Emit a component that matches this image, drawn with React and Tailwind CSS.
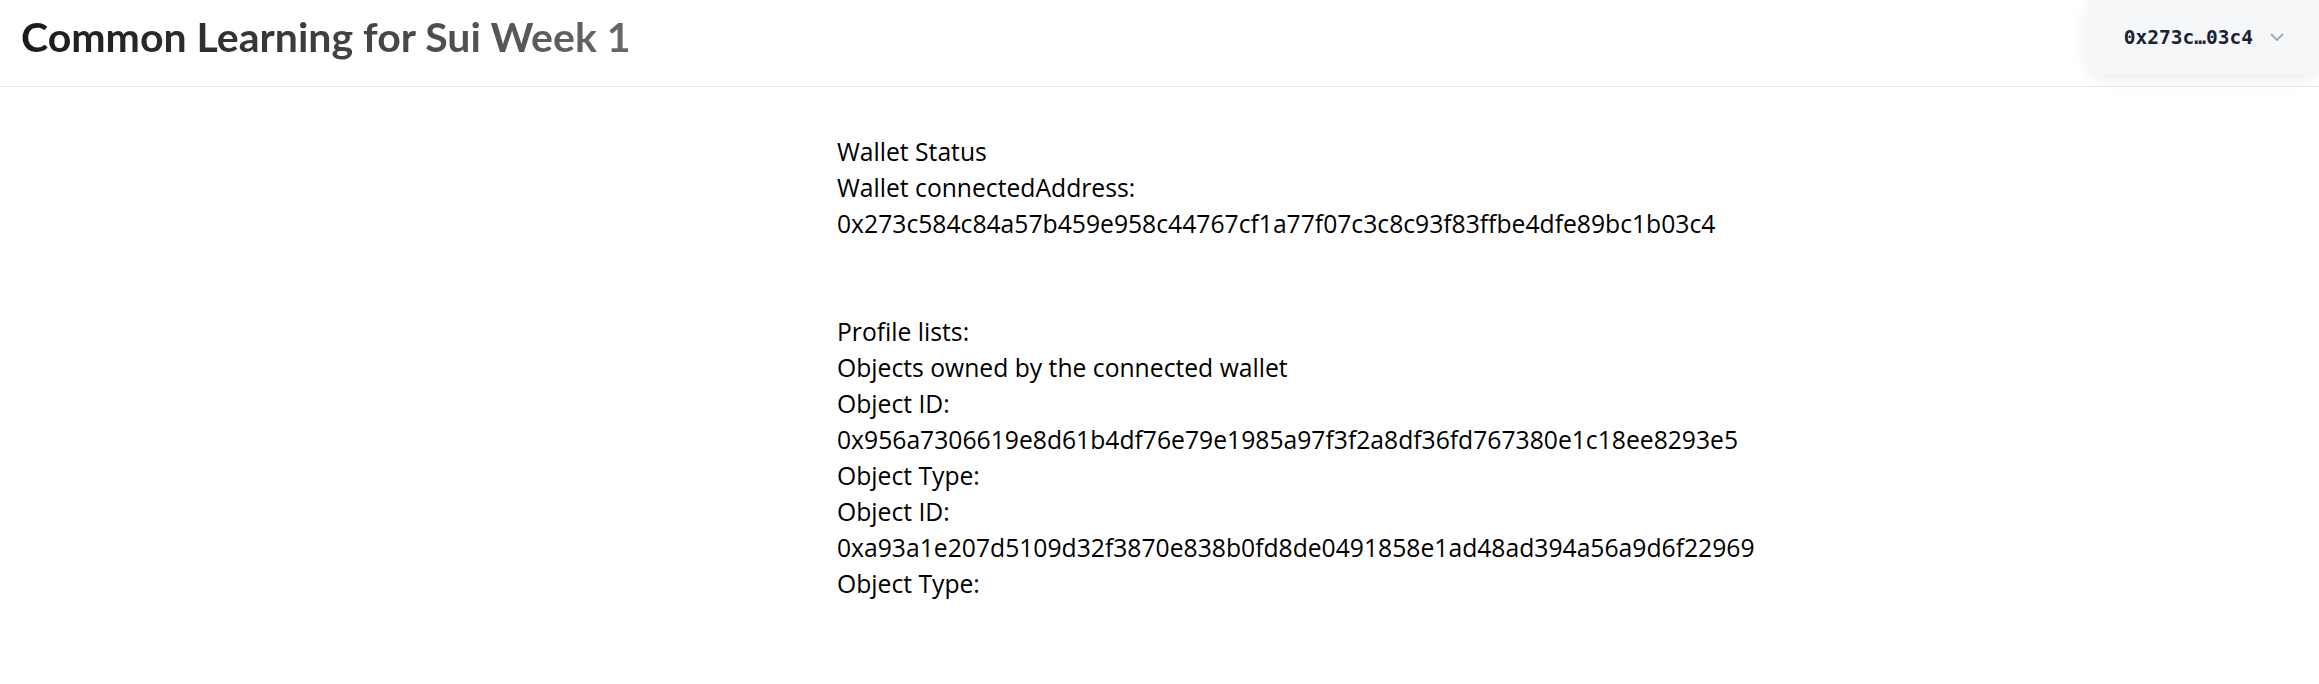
import React from "react";

const address =
  "0x273c584c84a57b459e958c44767cf1a77f07c3c8c93f83ffbe4dfe89bc1b03c4";

const objects = [
  { id: "0x956a7306619e8d61b4df76e79e1985a97f3f2a8df36fd767380e1c18ee8293e5", type: "" },
  { id: "0xa93a1e207d5109d32f3870e838b0fd8de0491858e1ad48ad394a56a9d6f22969", type: "" },
];

const ConnectButton = () => (
  <button className="flex items-center h-[75px] pl-[36px] pr-[35px] gap-[17px] bg-[#f6f7f9] rounded-bl-[18px] rounded-br-[18px] shadow-[0_4px_16px_rgba(0,0,0,0.08)]">
    <span className="font-['DejaVu_Sans_Mono',monospace] font-bold text-[19.5px] text-[#182435]">
      0x273c…03c4
    </span>
    <svg width="14" height="9" viewBox="0 0 14 9" fill="none">
      <path d="M1.5 1.5L7 7L12.5 1.5" stroke="#a0abb6" strokeWidth="1.8" strokeLinecap="round" strokeLinejoin="round" />
    </svg>
  </button>
);

export default function App() {
  return (
    <div className="min-h-screen bg-white font-['Open_Sans',sans-serif]">
      <header className="flex items-start justify-between h-[87px] pl-[21px] border-b border-[#e6e6e6]">
        <h1 className="mt-[10px] inline-block font-['Lato',sans-serif] font-bold text-[41px] leading-[1.3] bg-gradient-to-r from-[#1a1a1a] to-[#686868] bg-clip-text text-transparent">
          Common Learning for Sui Week 1
        </h1>
        <ConnectButton />
      </header>

      <main className="flex justify-center pt-[47px]">
        <div className="w-[645px] text-[24.7px] leading-[36px] text-black">
          {/* Wallet status */}
          <div>Wallet Status</div>
          <div>Wallet connectedAddress:</div>
          <div className="whitespace-nowrap">{address}</div>

          {/* Owned objects */}
          <div className="mt-[72px]">Profile lists:</div>
          <div>Objects owned by the connected wallet</div>
          {objects.map((obj) => (
            <div key={obj.id}>
              <div>Object ID:</div>
              <div className="whitespace-nowrap">{obj.id}</div>
              <div>Object Type: {obj.type}</div>
            </div>
          ))}
        </div>
      </main>
    </div>
  );
}
